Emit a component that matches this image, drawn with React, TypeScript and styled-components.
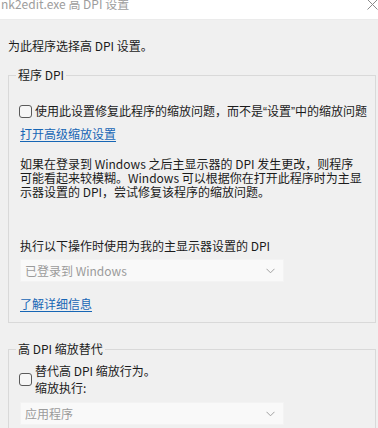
import React from 'react';
import styled, { createGlobalStyle } from 'styled-components';

const Global = createGlobalStyle`
  html, body { margin: 0; padding: 0; background: #f0f0f0; }
  body {
    font-family: "Noto Sans CJK SC", "Microsoft YaHei", sans-serif;
    font-size: 12px;
    color: #1b1b1b;
    width: 378px;
    height: 428px;
    overflow: hidden;
  }
`;

const Window = styled.div`
  width: 378px;
  height: 428px;
  display: flex;
  flex-direction: column;
  background: #f0f0f0;
  overflow: hidden;
`;

const TitleBar = styled.div`
  flex: none;
  height: 20px;
  box-sizing: border-box;
  background: #ffffff;
  border-bottom: 1px solid #ebebeb;
  display: flex;
  justify-content: space-between;
  align-items: flex-start;
  overflow: hidden;
`;

const Title = styled.div`
  color: #9d9d9d;
  font-size: 12px;
  line-height: 14px;
  margin-top: -3px;
  padding-left: 1px;
  white-space: nowrap;
`;

const CloseIcon = styled.svg`
  flex: none;
  margin-top: -1px;
  margin-right: 0;
`;

const Body = styled.div`
  padding: 0 2px 0 8px;
  display: flex;
  flex-direction: column;
`;

const Intro = styled.div`
  margin-top: 19px;
  line-height: 14px;
`;

const Group = styled.fieldset<{ $mt: number }>`
  margin: ${p => p.$mt}px 0 0 0;
  padding: 0 11px 11px 11px;
  border: 1px solid #d9d9d9;
  min-width: 0;
  display: flex;
  flex-direction: column;
  align-items: flex-start;
`;

const Legend = styled.legend`
  padding: 0 2px;
  margin-left: -4px;
  line-height: 14px;
  color: #1b1b1b;
`;

const CheckRow = styled.label<{ $mt: number }>`
  margin-top: ${p => p.$mt}px;
  display: flex;
  align-items: center;
  gap: 3px;
  margin-left: -1px;
  line-height: 14px;
  white-space: nowrap;
`;

const Box = styled.span`
  flex: none;
  width: 13px;
  height: 13px;
  box-sizing: border-box;
  border: 1px solid #5a5a5a;
  border-radius: 3px;
  background: #f6f6f6;
`;

const Quote = styled.span`
  font-family: "Liberation Sans", "Noto Sans", sans-serif;
`;

const TwoLines = styled.span`
  line-height: 17px;
`;

const Link = styled.a<{ $mt: number }>`
  margin-top: ${p => p.$mt}px;
  line-height: 14px;
  color: #1766b5;
  text-decoration: underline;
  text-underline-offset: 2px;
  cursor: pointer;
`;

const Para = styled.p<{ $mt: number }>`
  margin: ${p => p.$mt}px 0 0 0;
  line-height: 14px;
  white-space: nowrap;
`;

const Select = styled.div<{ $mt: number }>`
  margin-top: ${p => p.$mt}px;
  width: 264px;
  height: 23px;
  box-sizing: border-box;
  padding: 0 8px 0 4px;
  background: #f9f9f9;
  border: 1px solid #f3f3f3;
  display: flex;
  align-items: center;
  justify-content: space-between;
  color: #9b9b9b;
  line-height: 14px;
`;

const Chevron = () => (
  <svg width="9" height="6" viewBox="0 0 9 6">
    <path d="M0.5 0.8 L4.5 4.8 L8.5 0.8" fill="none" stroke="#a0a0a0" strokeWidth="1" />
  </svg>
);

export default function App() {
  return (
    <>
      <Global />
      <Window>
        <TitleBar>
          <Title>nk2edit.exe 高 DPI 设置</Title>
          <CloseIcon width="11" height="11" viewBox="0 0 11 11">
            <path d="M0.5 0.5 L10.5 10.5 M10.5 0.5 L0.5 10.5" stroke="#8a8a8a" strokeWidth="1" fill="none" />
          </CloseIcon>
        </TitleBar>
        <Body>
          <Intro>为此程序选择高 DPI 设置。</Intro>
          <Group $mt={15}>
            <Legend>程序 DPI</Legend>
            <CheckRow $mt={22}>
              <Box />
              <span>
                使用此设置修复此程序的缩放问题，而不是<Quote>“</Quote>设置<Quote>”</Quote>中的缩放问题
              </span>
            </CheckRow>
            <Link $mt={8}>打开高级缩放设置</Link>
            <Para $mt={16}>
              如果在登录到 Windows 之后主显示器的 DPI 发生更改，则程序
              <br />
              可能看起来较模糊。Windows 可以根据你在打开此程序时为主显
              <br />
              示器设置的 DPI，尝试修复该程序的缩放问题。
            </Para>
            <Para $mt={40}>执行以下操作时使用为我的主显示器设置的 DPI</Para>
            <Select $mt={6}>
              <span>已登录到 Windows</span>
              <Chevron />
            </Select>
            <Link $mt={15}>了解详细信息</Link>
          </Group>
          <Group $mt={19}>
            <Legend>高 DPI 缩放替代</Legend>
            <CheckRow $mt={6}>
              <Box />
              <TwoLines>
                替代高 DPI 缩放行为。
                <br />
                缩放执行:
              </TwoLines>
            </CheckRow>
            <Select $mt={6}>
              <span>应用程序</span>
              <Chevron />
            </Select>
          </Group>
        </Body>
      </Window>
    </>
  );
}
